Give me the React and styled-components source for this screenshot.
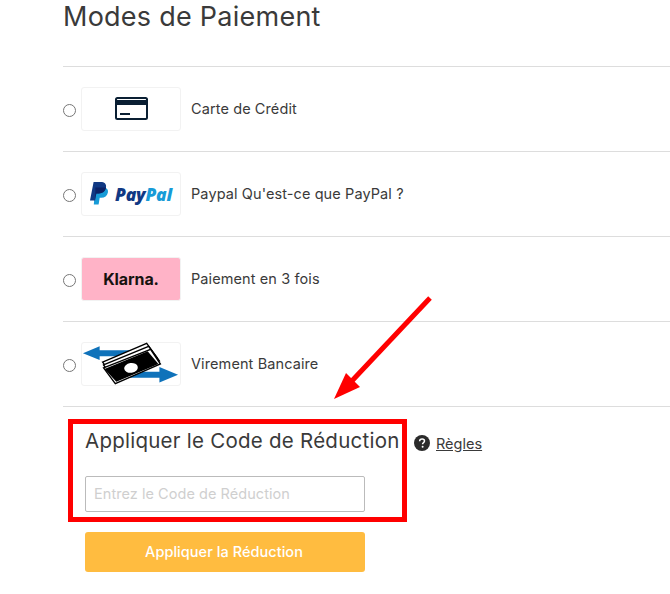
import React from "react"
import styled, { createGlobalStyle } from "styled-components"

const GlobalStyle = createGlobalStyle`
  html, body {
    margin: 0;
    padding: 0;
    background: #fff;
  }
  body {
    font-family: "Inter", "Open Sans", sans-serif;
    color: #333;
    overflow: hidden;
  }
`

const Page = styled.div`
  position: relative;
  width: 670px;
  height: 594px;
  padding-left: 63px;
  box-sizing: border-box;
  overflow: hidden;
`

const Title = styled.h2`
  height: 66px;
  margin: 0;
  font-size: 27px;
  font-weight: 400;
  line-height: 34px;
  letter-spacing: 0.25px;
  color: #3a3a3a;
`

const MethodRow = styled.label`
  display: flex;
  align-items: center;
  height: 84px;
  border-top: 1px solid #ddd;
`

const Radio = styled.input.attrs({ type: "radio", name: "pay" })`
  width: 13px;
  height: 13px;
  margin: 2px 5px 0 0;
  flex: none;
`

const LogoBox = styled.div`
  display: flex;
  align-items: center;
  justify-content: center;
  width: 100px;
  height: 44px;
  box-sizing: border-box;
  flex: none;
  border: 1px solid #f2f2f2;
  border-radius: 3px;
  margin-top: -1px;
  background: ${(p) => p.$bg || "#fff"};
`

const PayPalMark = styled.div`
  display: flex;
  align-items: center;
  gap: 6px;
`

const PayPalText = styled.span`
  font-family: "Open Sans", sans-serif;
  font-size: 17.5px;
  font-weight: 800;
  font-style: italic;
  color: #113984;
  letter-spacing: -0.2px;

  b {
    font-weight: 800;
    color: #179bd7;
  }
`

const KlarnaText = styled.span`
  font-size: 16px;
  font-weight: 700;
  color: #17120f;
  letter-spacing: -0.1px;
`

const MethodLabel = styled.span`
  margin-left: 10px;
  margin-top: -1px;
  font-size: 14.5px;
  letter-spacing: 0.1px;
  color: #3a3a3a;
  white-space: nowrap;
`

const Discount = styled.section`
  border-top: 1px solid #ddd;
  padding: 19px 0 0 22px;
`

const DiscountHead = styled.div`
  display: flex;
  align-items: center;
  height: 30px;
`

const DiscountTitle = styled.h3`
  width: 329px;
  margin: 0;
  font-size: 20.5px;
  font-weight: 400;
  line-height: 30px;
  letter-spacing: 0.25px;
  color: #3a3a3a;
  white-space: nowrap;
`

const RulesLink = styled.a`
  display: flex;
  align-items: center;
  gap: 6px;
  margin-top: 4px;
  font-size: 14.5px;
  color: #3a3a3a;

  span {
    text-decoration: underline;
  }
`

const CodeInput = styled.input`
  display: block;
  width: 280px;
  height: 36px;
  margin-top: 20px;
  padding: 0 8px 2px;
  box-sizing: border-box;
  border: 1px solid #bbb;
  border-radius: 2px;
  font-family: inherit;
  font-size: 14.5px;
  letter-spacing: 0.05px;

  &::placeholder {
    color: #cfcfcf;
    opacity: 1;
  }
`

const ApplyButton = styled.button`
  display: block;
  width: 280px;
  height: 40px;
  margin-top: 20px;
  padding: 0 2px 2px 0;
  border: 0;
  border-radius: 3px;
  background: #ffbc40;
  color: #fff;
  font-family: inherit;
  font-size: 14.5px;
  font-weight: 500;
  letter-spacing: 0.05px;
`

/* annotations painted on top of the screenshot */
const RedFrame = styled.div`
  position: absolute;
  left: 68px;
  top: 419px;
  width: 339px;
  height: 103px;
  box-sizing: border-box;
  border: 5px solid #f00;
  pointer-events: none;
`

const ArrowSvg = styled.svg`
  position: absolute;
  left: 325px;
  top: 290px;
`

const CardIcon = () => (
  <svg width="33" height="23" viewBox="0 0 33 23">
    <rect x="1" y="1" width="31" height="21" rx="1.5" fill="#fff" stroke="#0a1f33" strokeWidth="2" />
    <rect x="1" y="3" width="31" height="5" fill="#0a1f33" />
    <rect x="5" y="16" width="10" height="2" fill="#0a1f33" />
  </svg>
)

const PayPalIcon = () => (
  <svg width="19" height="23" viewBox="0 0 19 23">
    <path
      d="M5.4 5.5h7.5c3.4 0 5.6 1.7 5 5-.7 3.6-3.2 5.3-6.6 5.3H9.7L8.6 22.6H3.8z"
      fill="#179bd7"
    />
    <path
      d="M3.6 0h7.1c3.6 0 6 1.8 5.3 5.5-.7 3.9-3.5 5.9-7.2 5.9H6.3l-1.2 7H0z"
      fill="#113984"
    />
    <path
      d="M5.4 5.5h10.6c-.7 3.9-3.5 5.9-7.2 5.9H6.3l-1 6.1z"
      fill="#0c2266"
    />
  </svg>
)

const MoneyIcon = () => (
  <svg width="100" height="44" viewBox="0 0 100 44">
    <path d="M1 11l17-7v4h34v6H18v4z" fill="#0f72ba" />
    <path d="M40 30h39v-5l19 8-19 8v-5H40z" fill="#0f72ba" />
    <path d="M21 20L66 1l11 15-44 20z" fill="#fff" stroke="#000" strokeWidth="1.4" />
    <path d="M22 23L68 4l11 15-45 20z" fill="#fff" stroke="#000" strokeWidth="1.4" />
    <path d="M22 26L70 7l10 15-46 20z" fill="#fff" stroke="#000" strokeWidth="1.4" />
    <path d="M23 27L67 9l11 13-43 18z" fill="#000" />
    <ellipse cx="50" cy="26" rx="7" ry="5" fill="#fff" transform="rotate(-8 50 26)" />
  </svg>
)

const QuestionIcon = () => (
  <svg width="16" height="16" viewBox="0 0 16 16">
    <circle cx="8" cy="8" r="8" fill="#2b2b2b" />
    <path
      d="M5.6 6.2c.1-1.4 1.1-2.1 2.5-2.1 1.4 0 2.4.8 2.4 2 0 1-.6 1.4-1.2 1.8-.5.3-.7.5-.7 1.1v.3"
      fill="none"
      stroke="#fff"
      strokeWidth="1.5"
    />
    <circle cx="8.6" cy="11.8" r="1" fill="#fff" />
  </svg>
)

const App = () => (
  <Page>
    <GlobalStyle />
    <Title>Modes de Paiement</Title>

    <MethodRow>
      <Radio />
      <LogoBox>
        <CardIcon />
      </LogoBox>
      <MethodLabel>Carte de Crédit</MethodLabel>
    </MethodRow>

    <MethodRow>
      <Radio />
      <LogoBox>
        <PayPalMark>
          <PayPalIcon />
          <PayPalText>
            Pay<b>Pal</b>
          </PayPalText>
        </PayPalMark>
      </LogoBox>
      <MethodLabel>Paypal Qu'est-ce que PayPal ?</MethodLabel>
    </MethodRow>

    <MethodRow>
      <Radio />
      <LogoBox $bg="#ffb3c7">
        <KlarnaText>Klarna.</KlarnaText>
      </LogoBox>
      <MethodLabel>Paiement en 3 fois</MethodLabel>
    </MethodRow>

    <MethodRow>
      <Radio />
      <LogoBox>
        <MoneyIcon />
      </LogoBox>
      <MethodLabel>Virement Bancaire</MethodLabel>
    </MethodRow>

    <Discount>
      <DiscountHead>
        <DiscountTitle>Appliquer le Code de Réduction</DiscountTitle>
        <RulesLink>
          <QuestionIcon />
          <span>Règles</span>
        </RulesLink>
      </DiscountHead>
      <CodeInput placeholder="Entrez le Code de Réduction" />
      <ApplyButton>Appliquer la Réduction</ApplyButton>
    </Discount>

    <RedFrame />
    <ArrowSvg width="110" height="112" viewBox="0 0 110 112">
      <path d="M105 8L24 94" stroke="#f00" strokeWidth="5" fill="none" />
      <path d="M9 109L21 83 35 97z" fill="#f00" />
    </ArrowSvg>
  </Page>
)

export default App
